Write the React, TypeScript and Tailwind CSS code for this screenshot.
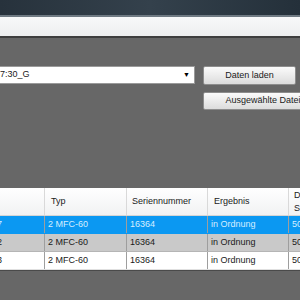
import React from "react";

const rows = [
  { id: "7", typ: "2 MFC-60", sn: "16364", res: "in Ordnung", d: "50", tone: "sel" },
  { id: "2", typ: "2 MFC-60", sn: "16364", res: "in Ordnung", d: "50", tone: "alt" },
  { id: "3", typ: "2 MFC-60", sn: "16364", res: "in Ordnung", d: "50", tone: "plain" },
];

const App: React.FC = () => {
  return (
    <div
      className="w-[300px] h-[300px] overflow-hidden flex flex-col bg-[#666666] text-[9px] text-[#1a1a1a]"
      style={{ fontFamily: '"Liberation Sans", Arial, sans-serif' }}
    >
      {/* window title area */}
      <div className="h-[15px] bg-gradient-to-r from-[#27323c] via-[#34414c] to-[#24303a]" />
      <div className="h-[2px] bg-[#6f7a83]" />
      {/* toolbar strip */}
      <div className="h-[19px] bg-gradient-to-b from-[#f7f8f9] to-[#eeeff0]" />
      <div className="h-[2px] bg-[#3e3e3e]" />

      {/* content */}
      <div className="flex-1 flex flex-col bg-[#676767]">
        <div className="flex items-start gap-[8px] pt-[28px]">
          {/* combo box */}
          <div className="w-[195px] shrink-0 h-[18px] bg-white border border-[#9a9a9a] border-l-0 flex items-center justify-between">
            <span className="whitespace-nowrap">7:30_G</span>
            <span className="text-[7px] mr-[4px] text-black">▼</span>
          </div>
          <div className="flex flex-col gap-[7px] shrink-0">
            <button className="w-[93px] h-[19px] rounded-[2px] border border-[#8d8d8d] bg-gradient-to-b from-[#fbfbfb] to-[#dcdcdc] text-[9px] text-[#1a1a1a]">
              Daten laden
            </button>
            <button className="w-[120px] h-[18px] rounded-[2px] border border-[#8d8d8d] bg-gradient-to-b from-[#fbfbfb] to-[#dcdcdc] text-[9px] text-[#1a1a1a] whitespace-nowrap">
              Ausgewählte Datei
            </button>
          </div>
        </div>

        {/* table */}
        <div className="mt-[78px] w-[320px] bg-white border-b border-[#4a4a4a]">
          <div className="flex h-[28px] bg-gradient-to-b from-[#ffffff] to-[#f1f2f3] border-b border-[#d5d5d5]">
            <div className="w-[45px] border-r border-[#d9d9d9]" />
            <div className="w-[82px] border-r border-[#d9d9d9] flex items-center pl-[6px]">Typ</div>
            <div className="w-[81px] border-r border-[#d9d9d9] flex items-center pl-[5px]">Seriennummer</div>
            <div className="w-[81px] border-r border-[#d9d9d9] flex items-center pl-[6px]">Ergebnis</div>
            <div className="flex-1 flex flex-col justify-center pl-[5px] leading-[13px]">
              <span>D</span>
              <span>S</span>
            </div>
          </div>
          {rows.map((r) => (
            <div
              key={r.id}
              className={`flex h-[18px] items-center border-b ${
                r.tone === "sel"
                  ? "bg-[#0b98f2] text-[#d6eeff] border-[#0b98f2]"
                  : r.tone === "alt"
                  ? "bg-[#c9c9c9] border-[#b5b5b5]"
                  : "bg-white border-[#e0e0e0]"
              }`}
            >
              <div className="w-[45px] h-full border-r border-[#9e9e9e] flex items-center">
                <span className="-ml-[3px]">{r.id}</span>
              </div>
              <div className="w-[82px] h-full border-r border-[#9e9e9e] flex items-center pl-[3px]">{r.typ}</div>
              <div className="w-[81px] h-full border-r border-[#9e9e9e] flex items-center pl-[3px]">{r.sn}</div>
              <div className="w-[81px] h-full border-r border-[#9e9e9e] flex items-center pl-[3px]">{r.res}</div>
              <div className="flex-1 h-full flex items-center pl-[3px]">{r.d}</div>
            </div>
          ))}
        </div>
      </div>
    </div>
  );
};

export default App;
